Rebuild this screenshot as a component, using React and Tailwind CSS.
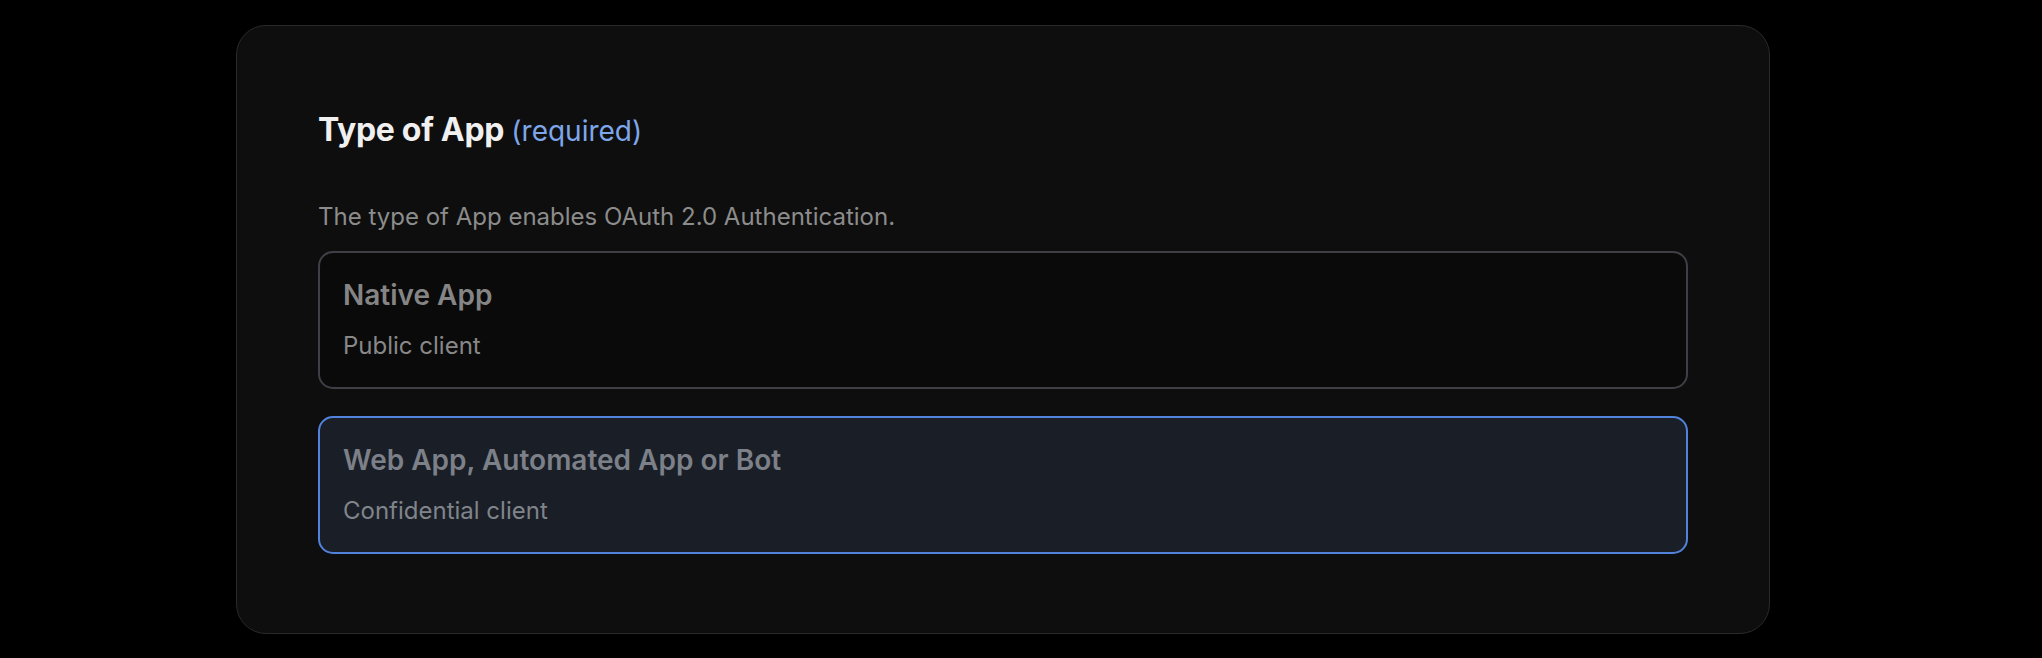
export default function App() {
  return (
    <div className="min-h-[658px] w-full bg-black pt-[25px]" style={{ fontFamily: "Inter, 'Noto Sans', sans-serif" }}>
      <div className="ml-[236px] w-[1534px] h-[609px] rounded-[30px] border border-[#2a2a2a] bg-[#0e0e0e] px-[81px] pt-[84px]">
        <h2 className="text-[32px] leading-[40px] font-bold text-[#f0f0f0] tracking-[-0.01em]">
          Type of App <span className="text-[28px] font-normal tracking-normal text-[#7ea6ea]">(required)</span>
        </h2>
        <p className="mt-[50px] text-[24px] leading-[32px] text-[#8c8c8c]">
          The type of App enables OAuth 2.0 Authentication.
        </p>
        <div className="mt-[18px] flex flex-col gap-[27px]">
          <div className="h-[138px] rounded-[15px] border-2 border-[#3f3f46] bg-[#0a0a0b] px-[23px] pt-[24px]">
            <div className="text-[28px] leading-[36px] font-semibold text-[#858585]">Native App</div>
            <div className="mt-[17px] text-[24px] leading-[32px] text-[#888888]">Public client</div>
          </div>
          <div className="h-[138px] rounded-[15px] border-2 border-[#5283dc] bg-[#1a1e26] px-[23px] pt-[24px]">
            <div className="text-[28px] leading-[36px] font-semibold text-[#7c8088]">Web App, Automated App or Bot</div>
            <div className="mt-[17px] text-[24px] leading-[32px] text-[#80848b]">Confidential client</div>
          </div>
        </div>
      </div>
    </div>
  );
}
